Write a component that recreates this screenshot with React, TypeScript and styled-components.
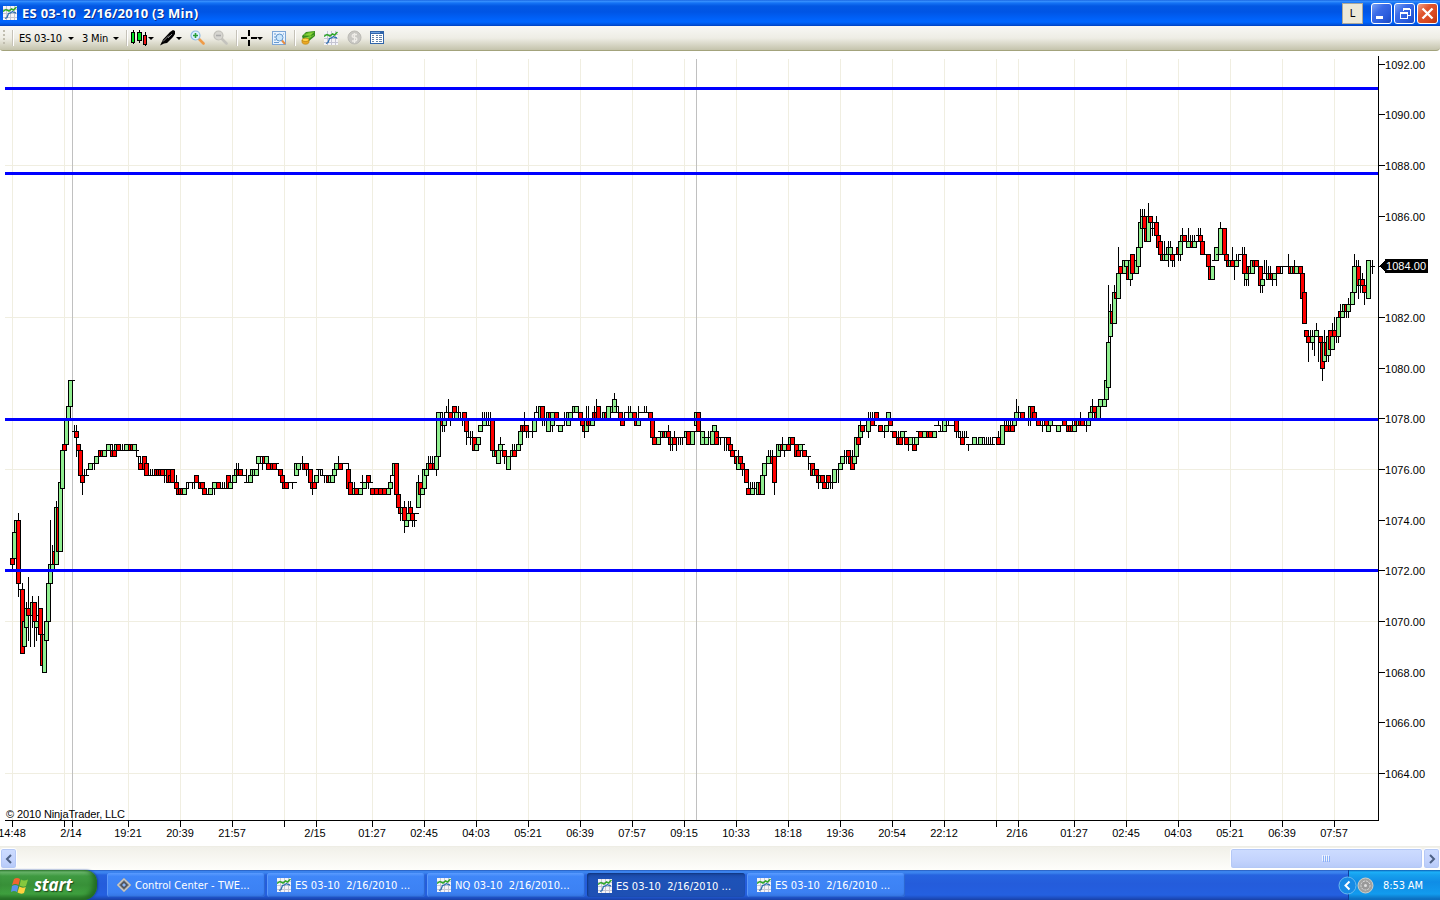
import * as React from 'react';
import styled, { createGlobalStyle, css } from 'styled-components';

const GlobalStyle = createGlobalStyle`
  * {
    box-sizing: border-box;
  }
  body {
    margin: 0;
    overflow: hidden;
    background: #fff;
    font-family: 'DejaVu Sans Condensed', 'DejaVu Sans', sans-serif;
  }
  svg {
    display: block;
    flex: none;
  }
`;

const Screen = styled.div`
  display: flex;
  flex-direction: column;
  width: 1440px;
  height: 900px;
  overflow: hidden;
`;

const TitleBar = styled.header`
  display: flex;
  align-items: center;
  height: 26px;
  padding: 0 2px 0 3px;
  background: linear-gradient(#0a54d8 0, #3d95ff 1px, #1573f5 3px, #0358e3 6px, #0055e5 12px, #0062fa 19px, #0066ff 22px, #0050d8 25px, #003dba 26px);
`;
const WindowTitle = styled.h1`
  flex: 1;
  margin: 0 0 0 5px;
  color: #fff;
  font: bold 13px/26px 'Open Sans', sans-serif;
  letter-spacing: 0.27px;
  text-shadow: 1px 1px 0 #0a2f8c;
  white-space: pre;
`;
const LinkButton = styled.div`
  width: 21px;
  height: 21px;
  margin-right: 6px;
  background: #ece9d8;
  border: 1px solid #aca899;
  color: #000;
  font-size: 11px;
  line-height: 20px;
  text-align: center;
`;
const CaptionButton = styled.div<{ $close?: boolean }>`
  display: flex;
  align-items: center;
  justify-content: center;
  width: 21px;
  height: 21px;
  margin-left: 2px;
  border: 1px solid #fff;
  border-radius: 3px;
  background: ${(p) =>
    p.$close ? 'linear-gradient(135deg, #f0a088 0%, #e0562f 35%, #d84820 70%, #b8330f 100%)' : 'linear-gradient(135deg, #7ca4f4 0%, #3c6ce8 35%, #2a5cdc 70%, #1c48c0 100%)'};
`;

const Toolbar = styled.nav`
  display: flex;
  align-items: center;
  height: 25px;
  padding: 0 0 1px 3px;
  background: linear-gradient(#f8f8f5, #eeede5 50%, #c4c3ac);
  border-bottom: 1px solid #a3a37c;
  border-radius: 0 0 4px 3px;
  font-size: 11px;
  letter-spacing: -0.2px;
`;
const Separator = styled.span<{ $left: number; $right: number }>`
  width: 2px;
  height: 16px;
  margin: 0 ${(p) => p.$right}px 0 ${(p) => p.$left}px;
  background: linear-gradient(90deg, #c5c2b8 1px, #fff 1px);
`;
const Grip = styled.span`
  width: 2px;
  height: 16px;
  background: repeating-linear-gradient(#c1beb0 0 2px, transparent 2px 4px);
`;
const ToolText = styled.span<{ $width: number }>`
  width: ${(p) => p.$width}px;
  padding-top: 1px;
  white-space: nowrap;
`;
const Arrow = styled.i<{ $right?: number }>`
  border: 3px solid transparent;
  border-top-color: #000;
  border-bottom: 0;
  margin: 1px ${(p) => p.$right ?? 0}px 0 0;
`;
const Tool = styled.span<{ $left?: number }>`
  margin-left: ${(p) => p.$left ?? 0}px;
`;

const ChartArea = styled.main`
  height: 795px;
  background: #fff;
`;

const ScrollBar = styled.div`
  display: flex;
  align-items: center;
  justify-content: space-between;
  height: 24px;
  border-top: 1px solid #eeede5;
  background: linear-gradient(#f1f0e9, #fefefb);
`;
const scrollPart = css`
  display: flex;
  align-items: center;
  justify-content: center;
  height: 21px;
  border: 1px solid #fff;
  border-radius: 3px;
  box-shadow: inset 0 0 0 1px #b4c8f6;
  background: linear-gradient(#cddcff, #c3d3fd 60%, #b6caf8);
`;
const ScrollButton = styled.div`
  ${scrollPart}
  width: 17px;
`;
const ScrollEnd = styled.div`
  display: flex;
`;
const ScrollThumb = styled.div`
  ${scrollPart}
  width: 193px;
`;

const Taskbar = styled.footer`
  display: flex;
  height: 30px;
  background: linear-gradient(#1f4ca6 0, #3b83ee 1px, #3a82ed 3px, #2663df 5px, #245cdb 14px, #2460e0 25px, #1d4ec0 28px, #1941a5 30px);
`;
const StartButton = styled.div`
  display: flex;
  align-items: center;
  width: 97px;
  margin-right: 10px;
  padding-left: 11px;
  border-radius: 0 12px 14px 0;
  background: linear-gradient(#2f7a30 0, #6ab56c 2px, #3f9a41 6px, #389038 15px, #3fa13f 24px, #2a762b 30px);
  box-shadow: inset -4px -2px 5px #226b22, 1px 0 2px #163f99;
`;
const StartText = styled.span`
  margin-left: 5px;
  color: #fff;
  font: italic bold 17px/28px 'Open Sans', sans-serif;
  letter-spacing: -0.2px;
  text-shadow: 1px 1px 1px #1c4a1c;
`;
const Tasks = styled.div`
  display: flex;
  gap: 2px;
  padding-top: 3px;
`;
const Task = styled.div<{ $active?: boolean }>`
  display: flex;
  align-items: center;
  width: 158px;
  height: 24px;
  padding: ${(p) => (p.$active ? '2px 0 0 11px' : '0 0 0 10px')};
  border-radius: 3px;
  background: ${(p) => (p.$active ? 'linear-gradient(#1b48a3, #1e52b7 25%, #1e50b4)' : 'linear-gradient(#5a9bff, #3f86f8 15%, #3c81f3 80%, #3575e2)')};
  box-shadow: ${(p) => (p.$active ? 'inset 1px 1px 2px #10357e' : 'inset -1px -1px 1px #2c65cf, inset 1px 0 0 #5e99f8')};
  color: #fff;
  font-size: 11px;
  white-space: pre;
`;
const TaskLabel = styled.span`
  margin-left: 4px;
  letter-spacing: 0.05px;
`;
const Tray = styled.div`
  display: flex;
  align-items: center;
  width: 92px;
  margin-left: auto;
  border-left: 1px solid #0f3f9c;
  background: linear-gradient(#0c5fb4 0, #1db0f8 2px, #16a0ee 5px, #0f8de6 12px, #129bee 24px, #0c6fc0 29px);
`;
const TrayToggle = styled.svg`
  margin-left: -11px;
`;
const Clock = styled.span`
  margin-left: 9px;
  color: #fff;
  font-size: 11px;
  letter-spacing: -0.1px;
`;

// [bar, open, close, high?, low?], every value in ticks (0.25) above 1068.00
type Bar = [number, number, number, number?, number?];

const BARS: Bar[] = [
  [0, 18, 17, 18, 16], [1, 18, 22], [2, 22, 24], [3, 24, 14, 25, 12], [4, 13, 13], [5, 13, 3, 14], [6, 4, 8], [7, 7, 10, 11],
  [8, 10, 9, 15, 5], [9, 9, 9, 9, 4], [10, 9, 11, 12, 7], [11, 11, 8, 11, 4], [12, 7, 8, 9, 5], [13, 9, 9, 12, 9], [14, 10, 6], [15, 6, 1],
  [16, 0, 6], [17, 5, 8], [18, 8, 14], [19, 14, 17, 24], [20, 16, 17, 20], [21, 19, 17], [22, 17, 26, 27], [23, 26, 19],
  [24, 19, 30], [25, 29, 35], [26, 36, 35], [27, 36, 40], [28, 40, 42], [29, 42, 46], [30, 46, 46], [31, 38, 38, 39],
  [32, 38, 37, 39, 34], [33, 36, 35], [34, 35, 31], [35, 31, 30, 31, 28], [36, 31, 31, 32], [37, 31, 31, 32], [38, 32, 32], [39, 32, 33],
  [41, 33, 33, 33, 32], [42, 33, 34], [44, 35, 34], [45, 35, 34], [46, 34, 35], [48, 35, 36], [50, 35, 34, 36], [51, 35, 34, 36],
  [52, 35, 36], [53, 36, 35], [55, 35, 35, 36], [57, 35, 36], [59, 36, 35], [60, 36, 35], [61, 35, 36], [62, 35, 35, 35, 34],
  [63, 34, 34, 34, 33], [64, 33, 32, 34], [65, 32, 32, 33], [66, 34, 32], [67, 33, 31], [68, 31, 31, 32], [69, 31, 31, 32], [70, 31, 31, 32],
  [72, 32, 31], [73, 32, 31], [74, 32, 31], [75, 32, 31], [76, 32, 32, 32, 30], [77, 31, 32], [78, 32, 30], [79, 31, 30],
  [80, 32, 30], [82, 30, 29, 31], [83, 29, 28], [84, 29, 28], [85, 29, 28], [86, 28, 29], [87, 29, 29, 30], [88, 30, 30, 30, 29],
  [90, 30, 30, 30, 29], [91, 30, 30, 30, 29], [92, 31, 30], [94, 30, 29], [95, 30, 29], [96, 29, 28], [99, 28, 29], [101, 29, 30, 30, 28],
  [103, 30, 29], [105, 29, 29, 30], [106, 29, 29, 30], [108, 31, 29], [109, 29, 30], [111, 30, 31], [112, 31, 32, 33], [113, 32, 31, 33],
  [114, 32, 31], [117, 30, 30, 32], [119, 30, 31], [120, 31, 32], [121, 31, 32], [122, 31, 32], [123, 33, 34, 34, 32], [125, 33, 33, 34, 32],
  [126, 34, 33], [127, 33, 34], [128, 33, 32], [130, 33, 32], [131, 33, 32], [132, 33, 33], [133, 32, 32], [134, 32, 31],
  [135, 31, 30], [136, 30, 29], [137, 30, 29], [138, 30, 30], [140, 30, 30, 30, 29], [142, 31, 33], [143, 32, 33], [145, 33, 33, 34],
  [146, 33, 32], [147, 33, 32, 33, 31], [149, 32, 30], [150, 30, 29, 30, 28], [151, 30, 29], [152, 30, 31], [153, 32, 32, 32, 31],
  [154, 32, 32, 32, 31], [155, 31, 31, 32], [156, 31, 31, 31, 30], [158, 31, 30], [159, 30, 31], [160, 30, 31], [161, 31, 32], [162, 32, 33],
  [163, 33, 33, 34], [164, 33, 32], [165, 33, 33], [168, 32, 29, 33], [169, 30, 28], [171, 28, 29, 30], [172, 29, 28], [174, 28, 29],
  [175, 30, 30, 31], [176, 29, 30], [178, 31, 30, 31, 29], [179, 30, 30], [180, 29, 28], [182, 29, 28], [184, 29, 28], [186, 29, 28],
  [188, 28, 29], [189, 29, 30, 31], [190, 31, 31], [191, 31, 33], [192, 33, 28], [193, 28, 26], [194, 26, 25, 26, 24], [195, 25, 26],
  [196, 26, 24, 27, 22], [197, 23, 24], [198, 24, 25, 27], [199, 26, 25, 27], [200, 25, 24, 25, 23], [201, 24, 24, 25, 23], [202, 25, 25],
  [203, 26, 30, 31], [204, 30, 28], [205, 28, 29], [206, 29, 32], [207, 31, 32], [208, 32, 33, 34], [209, 33, 32, 34], [210, 33, 33, 34],
  [211, 33, 32], [212, 32, 34, 34, 31], [213, 34, 41], [215, 40, 39, 41, 38], [216, 39, 40, 41, 38], [217, 41, 41, 42], [218, 41, 41, 43],
  [219, 41, 40, 41, 39], [221, 42, 41], [222, 40, 41], [223, 41, 41, 42], [224, 40, 40, 41], [225, 40, 40, 41, 39], [226, 41, 40],
  [227, 40, 38, 40, 36], [228, 37, 37, 38], [229, 37, 37, 38, 36], [230, 37, 37, 38], [231, 37, 35], [232, 35, 36], [233, 36, 37], [234, 38, 39],
  [235, 39, 39, 41], [236, 39, 40, 41], [237, 39, 39, 41], [238, 39, 39, 41], [239, 39, 39, 41], [240, 40, 35], [241, 34, 35], [242, 35, 34],
  [243, 33, 35], [244, 35, 36, 37], [246, 35, 34, 35, 33], [247, 34, 34], [248, 32, 34], [249, 34, 34], [250, 34, 35, 36], [251, 35, 34, 36],
  [252, 35, 35], [253, 35, 36], [254, 36, 38], [255, 39, 38], [256, 39, 38, 41], [257, 39, 38, 39, 37], [258, 38, 38, 38, 37],
  [260, 38, 38, 38, 37], [261, 38, 40, 41], [262, 41, 41, 42], [264, 40, 42], [265, 42, 40, 42, 39], [266, 40, 40, 41, 39], [268, 38, 41],
  [269, 41, 40], [270, 39, 41, 41, 38], [272, 41, 40], [273, 39, 39], [274, 38, 39], [276, 40, 40, 41, 39], [278, 39, 41], [279, 40, 41],
  [280, 41, 41, 42], [281, 41, 42], [282, 41, 42], [283, 41, 41], [284, 41, 40], [285, 40, 39], [286, 39, 38, 39, 37], [287, 38, 40, 42],
  [288, 40, 39, 42], [289, 40, 39], [290, 39, 40, 41], [291, 41, 40, 42], [292, 41, 40, 43], [293, 42, 40], [296, 40, 41], [297, 41, 40],
  [298, 40, 42], [300, 41, 42], [301, 41, 43, 44], [302, 42, 42, 42, 41], [303, 41, 41, 42], [304, 41, 40], [305, 40, 39], [306, 40, 40, 41],
  [307, 41, 41], [308, 41, 41, 42], [309, 40, 41, 42], [311, 41, 40], [312, 40, 39], [313, 39, 40, 42], [314, 41, 41], [316, 41, 41, 42],
  [317, 41, 41, 42], [319, 41, 40], [320, 40, 37, 40, 36], [321, 37, 36, 38], [323, 36, 37], [324, 38, 38], [325, 37, 38], [326, 38, 37],
  [327, 37, 38], [328, 38, 37, 39], [329, 37, 36, 37, 35], [330, 36, 37, 37, 35], [331, 37, 36, 38], [332, 37, 37, 37, 35], [333, 37, 37, 37, 36],
  [334, 37, 37, 37, 36], [335, 37, 37, 37, 36], [337, 37, 38], [338, 38, 36], [340, 36, 38], [341, 38, 38], [342, 39, 41, 41, 38], [343, 41, 38],
  [345, 36, 38], [346, 37, 37], [347, 36, 37], [348, 37, 37, 38], [350, 36, 38], [351, 38, 39], [352, 38, 36], [353, 37, 37],
  [354, 37, 37, 37, 36], [356, 37, 37, 37, 35], [357, 37, 37, 37, 35], [358, 37, 36], [359, 36, 35], [360, 35, 34], [361, 35, 35], [362, 34, 33],
  [363, 32, 34, 35], [364, 34, 33], [365, 33, 32, 34, 31], [367, 32, 30], [368, 29, 28, 30], [369, 29, 29, 30], [370, 28, 29, 30],
  [371, 29, 29, 30], [373, 28, 30], [374, 30, 28], [375, 28, 31], [376, 31, 33], [378, 33, 34, 35], [379, 34, 34, 35], [380, 34, 33, 35],
  [381, 34, 30, 34, 28], [382, 34, 34], [383, 34, 36], [384, 35, 36], [385, 36, 35, 37], [386, 35, 36, 36, 34], [388, 36, 35], [389, 36, 37],
  [390, 37, 36], [392, 36, 34], [393, 35, 34], [394, 35, 36], [395, 36, 36], [396, 35, 34], [398, 34, 34, 34, 32], [399, 33, 33], [400, 33, 31],
  [401, 31, 32], [402, 32, 31], [403, 31, 30, 31, 29], [404, 30, 31], [405, 31, 30], [406, 30, 29], [408, 31, 30, 31, 29], [409, 30, 30, 30, 29],
  [410, 30, 30, 30, 29], [411, 30, 32], [413, 32, 32, 32, 30], [414, 32, 33], [415, 33, 34], [416, 34, 34, 35], [417, 34, 34, 35, 33],
  [418, 35, 34, 35, 33], [419, 34, 33], [420, 34, 32, 35], [421, 33, 34], [422, 34, 37], [423, 37, 36], [424, 37, 39, 40], [425, 39, 38],
  [426, 39, 39], [428, 38, 40, 41, 37], [429, 40, 40, 41], [430, 40, 39, 41], [432, 41, 40], [434, 39, 38], [436, 38, 38, 38, 37], [437, 38, 39],
  [438, 40, 41], [439, 40, 39], [440, 38, 38], [441, 38, 37], [443, 37, 36, 38], [444, 37, 36], [445, 37, 38], [447, 37, 36],
  [448, 36, 36, 37, 35], [449, 36, 37], [451, 36, 35], [452, 36, 37], [453, 38, 38], [454, 38, 37], [456, 37, 38], [458, 38, 37], [459, 38, 37],
  [461, 37, 38], [462, 39, 39], [463, 39, 39, 40], [464, 38, 38, 39], [466, 38, 40], [467, 39, 39, 40], [468, 39, 39, 40], [472, 40, 38, 40, 37],
  [473, 38, 38, 38, 37], [474, 37, 37, 38], [475, 37, 36, 38], [476, 37, 37, 38], [477, 37, 37, 38], [478, 36, 36, 36, 35], [481, 36, 37],
  [482, 36, 36], [484, 36, 37], [486, 36, 36, 37], [487, 36, 36, 37], [488, 36, 36, 37], [489, 36, 36, 37], [490, 36, 36, 37], [491, 37, 37],
  [493, 37, 36, 38], [495, 36, 39], [496, 39, 39, 40, 38], [497, 39, 38, 40], [498, 39, 39, 40], [499, 39, 38, 40], [500, 39, 38, 40],
  [501, 39, 40], [502, 40, 41, 43], [503, 41, 41, 42], [505, 41, 40], [508, 40, 40, 42, 39], [509, 40, 42, 42, 39], [510, 42, 40], [511, 41, 40],
  [513, 40, 39], [515, 39, 39, 40, 38], [517, 40, 39], [518, 38, 39], [519, 39, 40], [520, 39, 39], [523, 38, 39], [526, 40, 39], [528, 39, 38],
  [529, 39, 38], [530, 39, 38, 40], [531, 38, 39, 40], [532, 40, 39], [533, 39, 40], [534, 40, 39, 41], [535, 40, 39], [537, 39, 39, 39, 38],
  [538, 39, 40], [539, 40, 41], [540, 41, 42, 43], [541, 42, 41], [542, 41, 40], [543, 40, 42], [544, 42, 43], [546, 42, 43], [547, 43, 46],
  [548, 45, 52, 61], [549, 53, 57, 58, 52], [550, 57, 55], [551, 55, 60, 61], [552, 60, 59], [553, 59, 63, 67], [554, 64, 63], [556, 63, 65],
  [557, 64, 65], [558, 64, 62], [559, 62, 65, 65, 61], [560, 66, 63], [562, 63, 65], [563, 64, 67], [564, 67, 71, 73], [565, 70, 72, 73],
  [566, 72, 70, 73], [567, 70, 68], [568, 68, 72, 74], [569, 72, 71], [570, 70, 70, 71, 69], [571, 71, 71], [572, 71, 69, 72], [573, 69, 67],
  [574, 68, 66], [575, 66, 65], [576, 65, 66, 68], [577, 65, 66], [578, 66, 67, 68, 64], [579, 66, 67, 68], [580, 66, 65, 66, 64],
  [581, 66, 66, 66, 64], [583, 67, 66, 67, 65], [584, 66, 68, 68, 65], [585, 68, 69, 70], [586, 69, 68], [588, 67, 68, 70], [589, 68, 68, 69],
  [590, 68, 67, 69], [591, 67, 68, 69], [593, 69, 69, 70], [594, 69, 68, 70], [595, 68, 66], [596, 66, 66], [598, 66, 64], [599, 64, 62],
  [600, 62, 64], [601, 65, 65], [602, 65, 67], [603, 66, 66], [604, 66, 70, 71], [606, 70, 66], [607, 66, 65], [608, 65, 64], [609, 64, 65],
  [610, 65, 64, 67], [611, 64, 64, 64, 62], [612, 64, 65, 66], [613, 65, 65, 66], [614, 66, 66], [615, 66, 66, 67], [616, 66, 63, 67, 61],
  [617, 62, 63, 63, 61], [618, 64, 63, 64, 61], [619, 63, 64], [620, 63, 65], [621, 65, 64], [622, 65, 64], [624, 64, 61, 64, 60],
  [625, 61, 62, 62, 60], [626, 63, 63, 65], [627, 63, 63, 65], [628, 62, 63, 64], [629, 63, 62, 64], [630, 63, 62, 63, 61], [631, 62, 63],
  [632, 63, 63, 64, 61], [633, 64, 63], [634, 63, 63], [635, 64, 64, 64, 63], [638, 64, 64, 66], [639, 64, 63], [640, 63, 64], [641, 64, 63, 65],
  [642, 63, 64], [643, 64, 64], [644, 64, 63], [645, 63, 59], [646, 60, 55], [647, 54, 53], [648, 53, 52, 53, 49], [649, 53, 53, 54],
  [650, 52, 53, 54, 51], [651, 53, 53, 53, 50], [652, 53, 54, 55], [653, 53, 53, 53, 49], [654, 53, 52], [655, 52, 48, 52, 46], [656, 49, 52, 54],
  [657, 52, 50], [658, 50, 53, 53, 49], [659, 54, 51], [660, 51, 53, 55], [661, 54, 53, 56], [662, 53, 53, 53, 52], [663, 53, 56, 56, 52],
  [664, 57, 56, 58], [665, 56, 57, 58], [666, 57, 58, 58, 56], [667, 58, 57, 58, 56], [668, 57, 58, 59, 56], [670, 58, 60], [671, 60, 64, 66],
  [672, 64, 64, 65], [673, 64, 61, 65, 59], [674, 61, 62, 62, 60], [675, 62, 61, 63], [676, 61, 60, 61, 58], [678, 59, 65], [680, 64, 64, 65, 63],
];

// bars without an entry did not move: flat at the previous close
const LAST_BAR = 680;
const fillGaps = (bars: Bar[]) => {
  const result: Bar[] = [];
  let next = 0;
  let close = 0;
  for (let i = 0; i <= LAST_BAR; i++) {
    if (bars[next][0] === i) {
      result.push(bars[next]);
      close = bars[next][2];
      next++;
    } else if (i !== 679 && i !== 677) {
      result.push([i, close, close]);
    }
  }
  return result;
};
const candles = fillGaps(BARS);

const barX = (i: number) => 12 + 2 * i;
const tickY = (t: number) => Math.floor(672.1 - t * 6.3333) - 51;

const TIMES: [number, string][] = [
  [12, '14:48'], [64, ''], [72, '2/14'], [128, '19:21'], [180, '20:39'], [232, '21:57'], [284, ''], [316, '2/15'], [372, '01:27'],
  [424, '02:45'], [476, '04:03'], [528, '05:21'], [580, '06:39'], [632, '07:57'], [684, '09:15'], [736, '10:33'], [788, '18:18'],
  [840, '19:36'], [892, '20:54'], [944, '22:12'], [996, ''], [1018, '2/16'], [1074, '01:27'], [1126, '02:45'], [1178, '04:03'],
  [1230, '05:21'], [1282, '06:39'], [1334, '07:57'],
];
const SESSIONS = [72, 696];
const LEVELS = [88, 173, 419, 570];
const PRICES = Array.from({ length: 15 }, (_, i) => 1092 - i * 2);

const Candle = ({ bar }: { bar: Bar }) => {
  const [i, open, close, high, low] = bar;
  const x = barX(i);
  const top = tickY(Math.max(open, close));
  const bottom = tickY(Math.min(open, close));
  const wickTop = tickY(Math.max(high ?? 0, open, close));
  const wickBottom = tickY(Math.min(low ?? 999, open, close));
  return (
    <g>
      {wickBottom > wickTop && <rect x={x} y={wickTop} width="1" height={wickBottom - wickTop + 1} />}
      <rect x={x - 2} y={top} width="5" height={bottom - top + 1} />
      {bottom > top && <rect x={x - 1} y={top + 1} width="3" height={bottom - top - 1} fill={close > open ? '#90ee90' : '#ff0000'} />}
    </g>
  );
};

const PriceChart = () => (
  <svg width="1440" height="795" shapeRendering="crispEdges" fontFamily="Liberation Sans, Arial, sans-serif" fontSize="11">
    <g fill="#f0eee1">
      {TIMES.filter(([x]) => x !== 72).map(([x]) => (
        <rect key={x} x={x} y="8" width="1" height="761" />
      ))}
      {[8, 32, 56, 80, -16].map((t) => (
        <rect key={t} x="5" y={tickY(t)} width="1373" height="1" />
      ))}
    </g>
    {SESSIONS.map((x) => (
      <rect key={x} x={x} y="8" width="1" height="761" fill="#c0c0c0" />
    ))}
    {candles.map((bar) => (
      <Candle key={bar[0]} bar={bar} />
    ))}
    {LEVELS.map((y) => (
      <rect key={y} x="5" y={y - 52} width="1373" height="3" fill="#0000ff" />
    ))}
    <rect x="1378" y="5" width="1" height="765" />
    <rect x="5" y="769" width="1374" height="1" />
    {PRICES.map((price) => {
      const y = tickY((price - 1068) * 4);
      return (
        <g key={price}>
          <rect x="1379" y={y} width="6" height="1" />
          <text x="1385" y={y + 5} textLength="40">
            {price.toFixed(2)}
          </text>
        </g>
      );
    })}
    <path d="M1379 215l6 -6v-1h43v14h-43v-1z" />
    <text x="1386" y="219" textLength="40" fill="#fff">
      1084.00
    </text>
    {TIMES.map(([x, label]) => (
      <g key={x}>
        <rect x={x} y="770" width="1" height="6" />
        <text x={label.includes('/') ? x - 1 : x} y="786" textAnchor="middle">
          {label}
        </text>
      </g>
    ))}
    <text x="6" y="767" textLength="119">
      © 2010 NinjaTrader, LLC
    </text>
  </svg>
);

const ChartIcon = () => (
  <svg width="14" height="14" viewBox="0 0 14 14" fill="none">
    <path d="M0 0h14v14H0z" fill="#f4f4f8" />
    <path d="M3.5 0v14M7.5 0v14M11.5 0v14M0 3.5h14M0 7.5h14M0 11.5h14" stroke="#c5c5d3" />
    <path d="M0 5.500l3-2 3 1.500L8.500 3l2 1L13.500 1" stroke="#30a828" strokeWidth="1.500" />
    <path d="M2 12.500l2-1 1.500-4 2-.5 2-1.500L11 6.500l2 .5" stroke="#3070b0" strokeWidth="1.300" />
  </svg>
);

const CandlesIcon = () => (
  <svg width="17" height="16" shapeRendering="crispEdges">
    <path d="M2 0h1v14H2zM8 0h1v13H8zM14 2h1v14h-1zM0 2h4v11H0zM6 2h5v9H6zM12 5h4v10h-4z" />
    <path d="M1 3h2v9H1zM7 3h3v7H7z" fill="#00e020" />
    <path d="M13 6h2v8h-2z" fill="#f01818" />
  </svg>
);

const PenIcon = () => (
  <svg width="16" height="16">
    <path d="M0 15.500l3-6L10 2l3-2 2 1v3l-2 3-6 6-3 .5z" />
    <path d="M3 11.500l6-6M8 8l4-4" stroke="#aaa" strokeWidth=".8" />
  </svg>
);

const ZoomIcon = ({ out }: { out?: boolean }) => (
  <svg width="15" height="15" fill="none">
    <path d="M8.500 8.500l5 5" stroke={out ? '#c4c3bd' : '#ef9b48'} strokeWidth="2.600" strokeLinecap="round" />
    <circle cx="5.500" cy="5.500" r="4.500" fill={out ? '#d7d6d1' : '#dff1ff'} stroke={out ? '#c0bfb9' : '#8fbbe4'} strokeWidth="1.200" />
    <path d={out ? 'M3 5.500h5' : 'M3 5.500h5M5.500 3v5'} stroke={out ? '#aaa' : '#279d36'} strokeWidth="1.600" />
  </svg>
);

const CrosshairIcon = () => (
  <svg width="16" height="16" shapeRendering="crispEdges">
    <path d="M7 0h2v6H7zM7 10h2v6H7zM0 7h6v2H0zM10 7h6v2h-6z" />
  </svg>
);

const PreviewIcon = () => (
  <svg width="14" height="14" fill="none">
    <rect x=".5" y=".5" width="13" height="13" fill="#e8f3ff" stroke="#7ba6d6" />
    <path d="M2 3h2M2 6h2M2 9h2M2 11.500h5M11 3h1" stroke="#679bd1" />
    <circle cx="7.500" cy="6.500" r="3.500" fill="#cbe7fc" stroke="#5f95cc" />
    <path d="M10 9.500l3 3.500" stroke="#e58b43" strokeWidth="2" />
  </svg>
);

const MoneyIcon = () => (
  <svg width="15" height="14">
    <path d="M1 5l4-4 9-1v5l-6 5-6-1z" fill="#388b23" />
    <path d="M3 4l4-2 6-1-4 4zM3 7l4 1 6-4" fill="#8ad43c" stroke="#66b929" />
    <ellipse cx="4.500" cy="9" rx="3.500" ry="1.800" fill="#ffd24b" stroke="#c68b13" strokeWidth=".7" />
    <path d="M1 9v2c0 3 7 3 7 0V9c-1 2-6 2-7 0z" fill="#eba724" stroke="#bb8613" strokeWidth=".7" />
  </svg>
);

const DollarIcon = () => (
  <svg width="15" height="15">
    <circle cx="7.500" cy="7.500" r="6.500" fill="#c8c7c3" stroke="#bbbab4" />
    <path d="M10 4.500H6.500Q4.500 5 5.500 7l4 1q1 2-1 3H5M7.500 3v10" fill="none" stroke="#efede8" strokeWidth="1.300" />
  </svg>
);

const TableIcon = () => (
  <svg width="14" height="13" shapeRendering="crispEdges">
    <path d="M0 0h14v13H0z" fill="#3165aa" />
    <path d="M1 3h12v9H1z" fill="#fff" />
    <path d="M1 1h9v1H1z" fill="#70a3e2" />
    <path d="M2 4h2v1H2zM2 6h2v1H2zM2 8h2v1H2zM2 10h2v1H2zM6 4h2v1H6zM9 4h3v1H9zM6 6h2v1H6zM9 6h3v1H9zM6 8h2v1H6zM9 8h3v1H9zM6 10h2v1H6zM9 10h3v1H9z" fill="#6683aa" />
  </svg>
);

const WindowsLogo = () => (
  <svg width="18" height="17">
    <path d="M3 2q3-2 6 0L7.500 8q-3-2-6.500 0z" fill="#f06431" />
    <path d="M10 2.500q3 2 7 0L15 9q-3 1.500-6.500-.5z" fill="#85c83e" />
    <path d="M1 9q3-2 6.300 0L6 15q-3-2-6 0z" fill="#5a91ec" />
    <path d="M8.300 9.500q3 2 6.500.5L13 16q-3 1.500-6.500-.5z" fill="#ffd140" />
  </svg>
);

const ControlIcon = () => (
  <svg width="14" height="14">
    <path d="M7 0l7 7-7 7-7-7z" fill="#6a6c70" />
    <path d="M7 1l6 6-6 6-6-6z" fill="none" stroke="#c8c7c3" strokeWidth="1.600" />
    <path d="M7 3.500L10.500 7 7 10.500 3.500 7z" fill="#4a4f58" />
    <path d="M7 5l2 2-2 2-2-2z" fill="#8ab4f4" />
  </svg>
);

const TASKS = ['Control Center - TWE...', 'ES 03-10  2/16/2010 ...', 'NQ 03-10  2/16/2010...', 'ES 03-10  2/16/2010 ...', 'ES 03-10  2/16/2010 ...'];

function App() {
  return (
    <Screen>
      <GlobalStyle />
      <TitleBar>
        <ChartIcon />
        <WindowTitle>ES 03-10{'  '}2/16/2010 (3 Min)</WindowTitle>
        <LinkButton>L</LinkButton>
        <CaptionButton>
          <svg width="13" height="13">
            <path d="M1 9h7v3H1z" fill="#fff" />
          </svg>
        </CaptionButton>
        <CaptionButton>
          <svg width="13" height="13" fill="none" stroke="#fff" shapeRendering="crispEdges">
            <path d="M5 4V2h7v6h-2M5 1.500h7M2 5.500h7v6H2zM2 6.500h7" />
          </svg>
        </CaptionButton>
        <CaptionButton $close>
          <svg width="13" height="13">
            <path d="M1.500 1.500l10 10M11.500 1.500l-10 10" stroke="#fff" strokeWidth="2.300" />
          </svg>
        </CaptionButton>
      </TitleBar>
      <Toolbar>
        <Grip />
        <Separator $left={7} $right={5} />
        <ToolText $width={49}>ES 03-10</ToolText>
        <Arrow $right={8} />
        <ToolText $width={31}>3 Min</ToolText>
        <Arrow $right={7} />
        <Separator $left={0} $right={3} />
        <CandlesIcon />
        <Arrow $right={6} />
        <PenIcon />
        <Arrow $right={8} />
        <ZoomIcon />
        <Tool $left={8}>
          <ZoomIcon out />
        </Tool>
        <Separator $left={8} $right={3} />
        <CrosshairIcon />
        <Arrow $right={9} />
        <PreviewIcon />
        <Separator $left={8} $right={5} />
        <MoneyIcon />
        <Tool $left={8}>
          <ChartIcon />
        </Tool>
        <Tool $left={9}>
          <DollarIcon />
        </Tool>
        <Tool $left={8}>
          <TableIcon />
        </Tool>
      </Toolbar>
      <ChartArea>
        <PriceChart />
      </ChartArea>
      <ScrollBar>
        <ScrollButton>
          <svg width="8" height="10" fill="none" stroke="#4d6185" strokeWidth="2">
            <path d="M6 1L2 5l4 4" />
          </svg>
        </ScrollButton>
        <ScrollEnd>
          <ScrollThumb>
            <svg width="9" height="7" shapeRendering="crispEdges">
              <path d="M0 0h1v6H0zM2 0h1v6H2zM4 0h1v6H4zM6 0h1v6H6z" fill="#eef4fe" />
              <path d="M1 1h1v6H1zM3 1h1v6H3zM5 1h1v6H5zM7 1h1v6H7z" fill="#8cb0f8" />
            </svg>
          </ScrollThumb>
          <ScrollButton>
            <svg width="8" height="10" fill="none" stroke="#4d6185" strokeWidth="2">
              <path d="M2 1l4 4-4 4" />
            </svg>
          </ScrollButton>
        </ScrollEnd>
      </ScrollBar>
      <Taskbar>
        <StartButton>
          <WindowsLogo />
          <StartText>start</StartText>
        </StartButton>
        <Tasks>
          {TASKS.map((label, index) => (
            <Task key={index} $active={index === 3}>
              {index === 0 ? <ControlIcon /> : <ChartIcon />}
              <TaskLabel>{label}</TaskLabel>
            </Task>
          ))}
        </Tasks>
        <Tray>
          <TrayToggle width="19" height="19">
            <circle cx="9.500" cy="9.500" r="8.500" fill="#168be5" stroke="#69b9ee" />
            <path d="M11.500 5.500l-4 4 4 4" fill="none" stroke="#fff" strokeWidth="2" />
          </TrayToggle>
          <svg width="17" height="17">
            <circle cx="8.500" cy="8.500" r="7.500" fill="#a2a2a0" stroke="#d0d0ca" />
            <circle cx="8.500" cy="8.500" r="4.500" fill="#999" stroke="#ddd" strokeDasharray="2 1" />
            <circle cx="8.500" cy="8.500" r="1.500" fill="#ddd" />
          </svg>
          <Clock>8:53 AM</Clock>
        </Tray>
      </Taskbar>
    </Screen>
  );
}

export default App;
